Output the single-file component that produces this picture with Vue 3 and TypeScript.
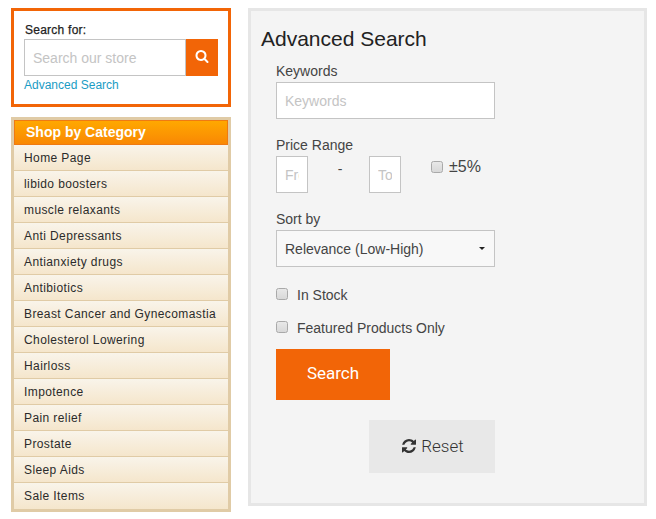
<script setup lang="ts">
const categories: string[] = [
  'Home Page', 'libido boosters', 'muscle relaxants', 'Anti Depressants', 'Antianxiety drugs',
  'Antibiotics', 'Breast Cancer and Gynecomastia', 'Cholesterol Lowering', 'Hairloss', 'Impotence',
  'Pain relief', 'Prostate', 'Sleep Aids', 'Sale Items'
]
</script>

<template>
  <div class="page">
    <aside class="side">
      <form class="search-box" @submit.prevent>
        <label class="search-label">Search for:</label>
        <div class="search-row">
          <input class="search-input" placeholder="Search our store" />
          <button class="search-btn" aria-label="Search">
            <svg viewBox="0 0 1792 1792" width="14" height="14"><path fill="#fff" d="M1216 832q0-185-131.500-316.500t-316.500-131.500-316.500 131.500-131.500 316.500 131.500 316.500 316.500 131.500 316.500-131.500 131.500-316.500zm512 832q0 52-38 90t-90 38q-54 0-90-38l-343-342q-179 124-399 124-143 0-273.500-55.500t-225-150-150-225-55.500-273.500 55.500-273.500 150-225 225-150 273.500-55.500 273.500 55.500 225 150 150 225 55.500 273.500q0 220-124 399l343 343q37 37 37 90z"/></svg>
          </button>
        </div>
        <a class="adv-link" href="#">Advanced Search</a>
      </form>
      <nav class="cats">
        <div class="cats-head">Shop by Category</div>
        <a v-for="c in categories" :key="c" class="cat" href="#">{{ c }}</a>
      </nav>
    </aside>

    <main class="main">
      <h1 class="title">Advanced Search</h1>
      <form class="form" @submit.prevent>
        <label class="lbl">Keywords</label>
        <input class="field wide" placeholder="Keywords" />

        <label class="lbl price-lbl">Price Range</label>
        <div class="price-row">
          <input class="field small" placeholder="From" />
          <span class="dash">-</span>
          <input class="field small" placeholder="To" />
          <label class="pct"><input type="checkbox" class="chk" /><span>±5%</span></label>
        </div>

        <label class="lbl sort-lbl">Sort by</label>
        <div class="field wide select">
          <span>Relevance (Low-High)</span>
          <i class="caret"></i>
        </div>

        <label class="check stock"><input type="checkbox" class="chk" /><span>In Stock</span></label>
        <label class="check featured"><input type="checkbox" class="chk" /><span>Featured Products Only</span></label>

        <button class="btn-search">Search</button>
        <button class="btn-reset" type="reset">
          <svg viewBox="0 0 1536 1536" width="14" height="14"><path fill="#333" d="M1511 928q0 5-1 7-64 268-268 434.500t-478 166.500q-146 0-282.500-55t-243.500-157l-129 129q-19 19-45 19t-45-19-19-45v-448q0-26 19-45t45-19h448q26 0 45 19t19 45-19 45l-137 137q71 66 161 102t187 36q134 0 250-65t186-179q11-17 53-117 8-23 30-23h192q13 0 22.500 9.500t9.500 22.500zm25-800v448q0 26-19 45t-45 19h-448q-26 0-45-19t-19-45 19-45l138-138q-148-137-349-137-134 0-250 65t-186 179q-11 17-53 117-8 23-30 23h-199q-13 0-22.500-9.500t-9.500-22.500v-7q65-268 270-434.500t480-166.500q146 0 284 55.500t245 156.500l130-129q19-19 45-19t45 19 19 45z"/></svg>
          Reset
        </button>
      </form>
    </main>
  </div>
</template>

<style>
html, body { margin: 0; background: #fff; }
</style>

<style scoped>
* { box-sizing: border-box; }
.page {
  display: flex;
  align-items: flex-start;
  gap: 17px;
  width: 656px;
  height: 519px;
  padding: 8px 9px 0 11px;
  overflow: hidden;
  font-family: "Liberation Sans", Arial, sans-serif;
  color: #333;
}
.side { width: 220px; flex: none; display: flex; flex-direction: column; gap: 10px; }
.search-box {
  height: 99px;
  border: 3px solid #f26507;
  background: #fff;
  padding: 11px 10px 0 10px;
  display: flex;
  flex-direction: column;
}
.search-label { font-size: 12px; line-height: 16px; color: #222; margin-left: 1px; letter-spacing: 0.25px; -webkit-text-stroke: 0.25px #222; }
.search-row { display: flex; height: 37px; margin-top: 1px; }
.search-input {
  width: 162px;
  height: 37px;
  border: 1px solid #c4c4c4;
  padding: 0 8px;
  font: 14px "Liberation Sans", Arial, sans-serif;
  outline: none;
  border-radius: 0;
  color: #333;
}
.search-input::placeholder { color: #c4c4c4; opacity: 1; }
.search-btn {
  width: 32px;
  height: 37px;
  border: none;
  padding: 0 0 3px;
  background: #f26507;
  display: flex;
  align-items: center;
  justify-content: center;
}
.adv-link { font-size: 12px; line-height: 16px; color: #1a9cc4; text-decoration: none; margin-top: 1px; }
.cats {
  border: 3px solid #e0cba6;
  display: flex;
  flex-direction: column;
  background: #f7eedd;
}
.cats-head {
  height: 25px;
  border: 1px solid #ef7a12;
  background: linear-gradient(#ffa800, #f98804);
  color: #fff;
  font-size: 14px;
  font-weight: bold;
  line-height: 23px;
  padding-left: 11px;
}
.cat {
  height: 26px;
  border-bottom: 1px solid #e0cba6;
  background: linear-gradient(#f9f4ea, #f5e6cc);
  color: #2b2b2b;
  font-size: 12px;
  line-height: 27px;
  padding-left: 10px;
  letter-spacing: 0.4px;
  text-decoration: none;
}
.cat:last-child { border-bottom: none; }
.main {
  width: 399px;
  height: 498px;
  flex: none;
  border: 3px solid #e6e6e6;
  background: #f4f4f4;
}
.title {
  margin: 0;
  padding: 15px 0 0 10px;
  font-size: 21px;
  line-height: 26px;
  font-weight: normal;
  color: #222;
}
.form { padding: 9px 0 0 25px; display: flex; flex-direction: column; align-items: flex-start; }
.lbl { font-size: 14px; line-height: 20px; color: #444; }
.field {
  height: 37px;
  border: 1px solid #c4c4c4;
  background: #fff;
  padding: 0 8px;
  font: 14px "Liberation Sans", Arial, sans-serif;
  color: #444;
  border-radius: 0;
  outline: none;
}
.field::placeholder { color: #c4c4c4; opacity: 1; }
.wide { width: 219px; margin-top: 1px; }
.small { width: 32px; height: 37px; }
.price-lbl { margin-top: 16px; }
.price-row { display: flex; align-items: flex-start; margin-top: 1px; }
.dash { width: 61px; padding-left: 3px; text-align: center; font-size: 14px; line-height: 20px; margin-top: 3px; color: #444; }
.pct { display: flex; align-items: center; margin-left: 30px; font-size: 16px; line-height: 20px; color: #444; margin-top: 1px; }
.pct span { margin-left: 6px; }
.chk {
  appearance: none;
  width: 12px;
  height: 12px;
  margin: 0;
  border: 1px solid #a9a9a9;
  border-radius: 2.5px;
  background: linear-gradient(#e8e8e8, #d8d8d8);
  flex: none;
}
.sort-lbl { margin-top: 16px; }
.select {
  display: flex;
  align-items: center;
  justify-content: space-between;
  background: #f8f8f8;
  padding-right: 9px;
}
.caret { width: 0; height: 0; border-left: 3px solid transparent; border-right: 3px solid transparent; border-top: 3px solid #222; }
.check { display: flex; align-items: center; font-size: 14px; line-height: 20px; color: #444; }
.check .chk { margin-right: 9px; margin-top: -3px; }
.stock { margin-top: 18px; }
.featured { margin-top: 13px; }
.btn-search {
  margin-top: 11px;
  width: 114px;
  height: 51px;
  border: none;
  padding: 0 0 3px;
  background: #f26507;
  color: #fff;
  font: 17px Roboto, "Liberation Sans", sans-serif;
}
.btn-reset {
  margin: 20px 0 0 93px;
  width: 126px;
  height: 53px;
  border: none;
  padding: 0 0 2px 2px;
  background: #e8e8e8;
  color: #333;
  font: 300 17px Roboto, "Liberation Sans", sans-serif;
  display: flex;
  align-items: center;
  justify-content: center;
  gap: 5px;
}
</style>
